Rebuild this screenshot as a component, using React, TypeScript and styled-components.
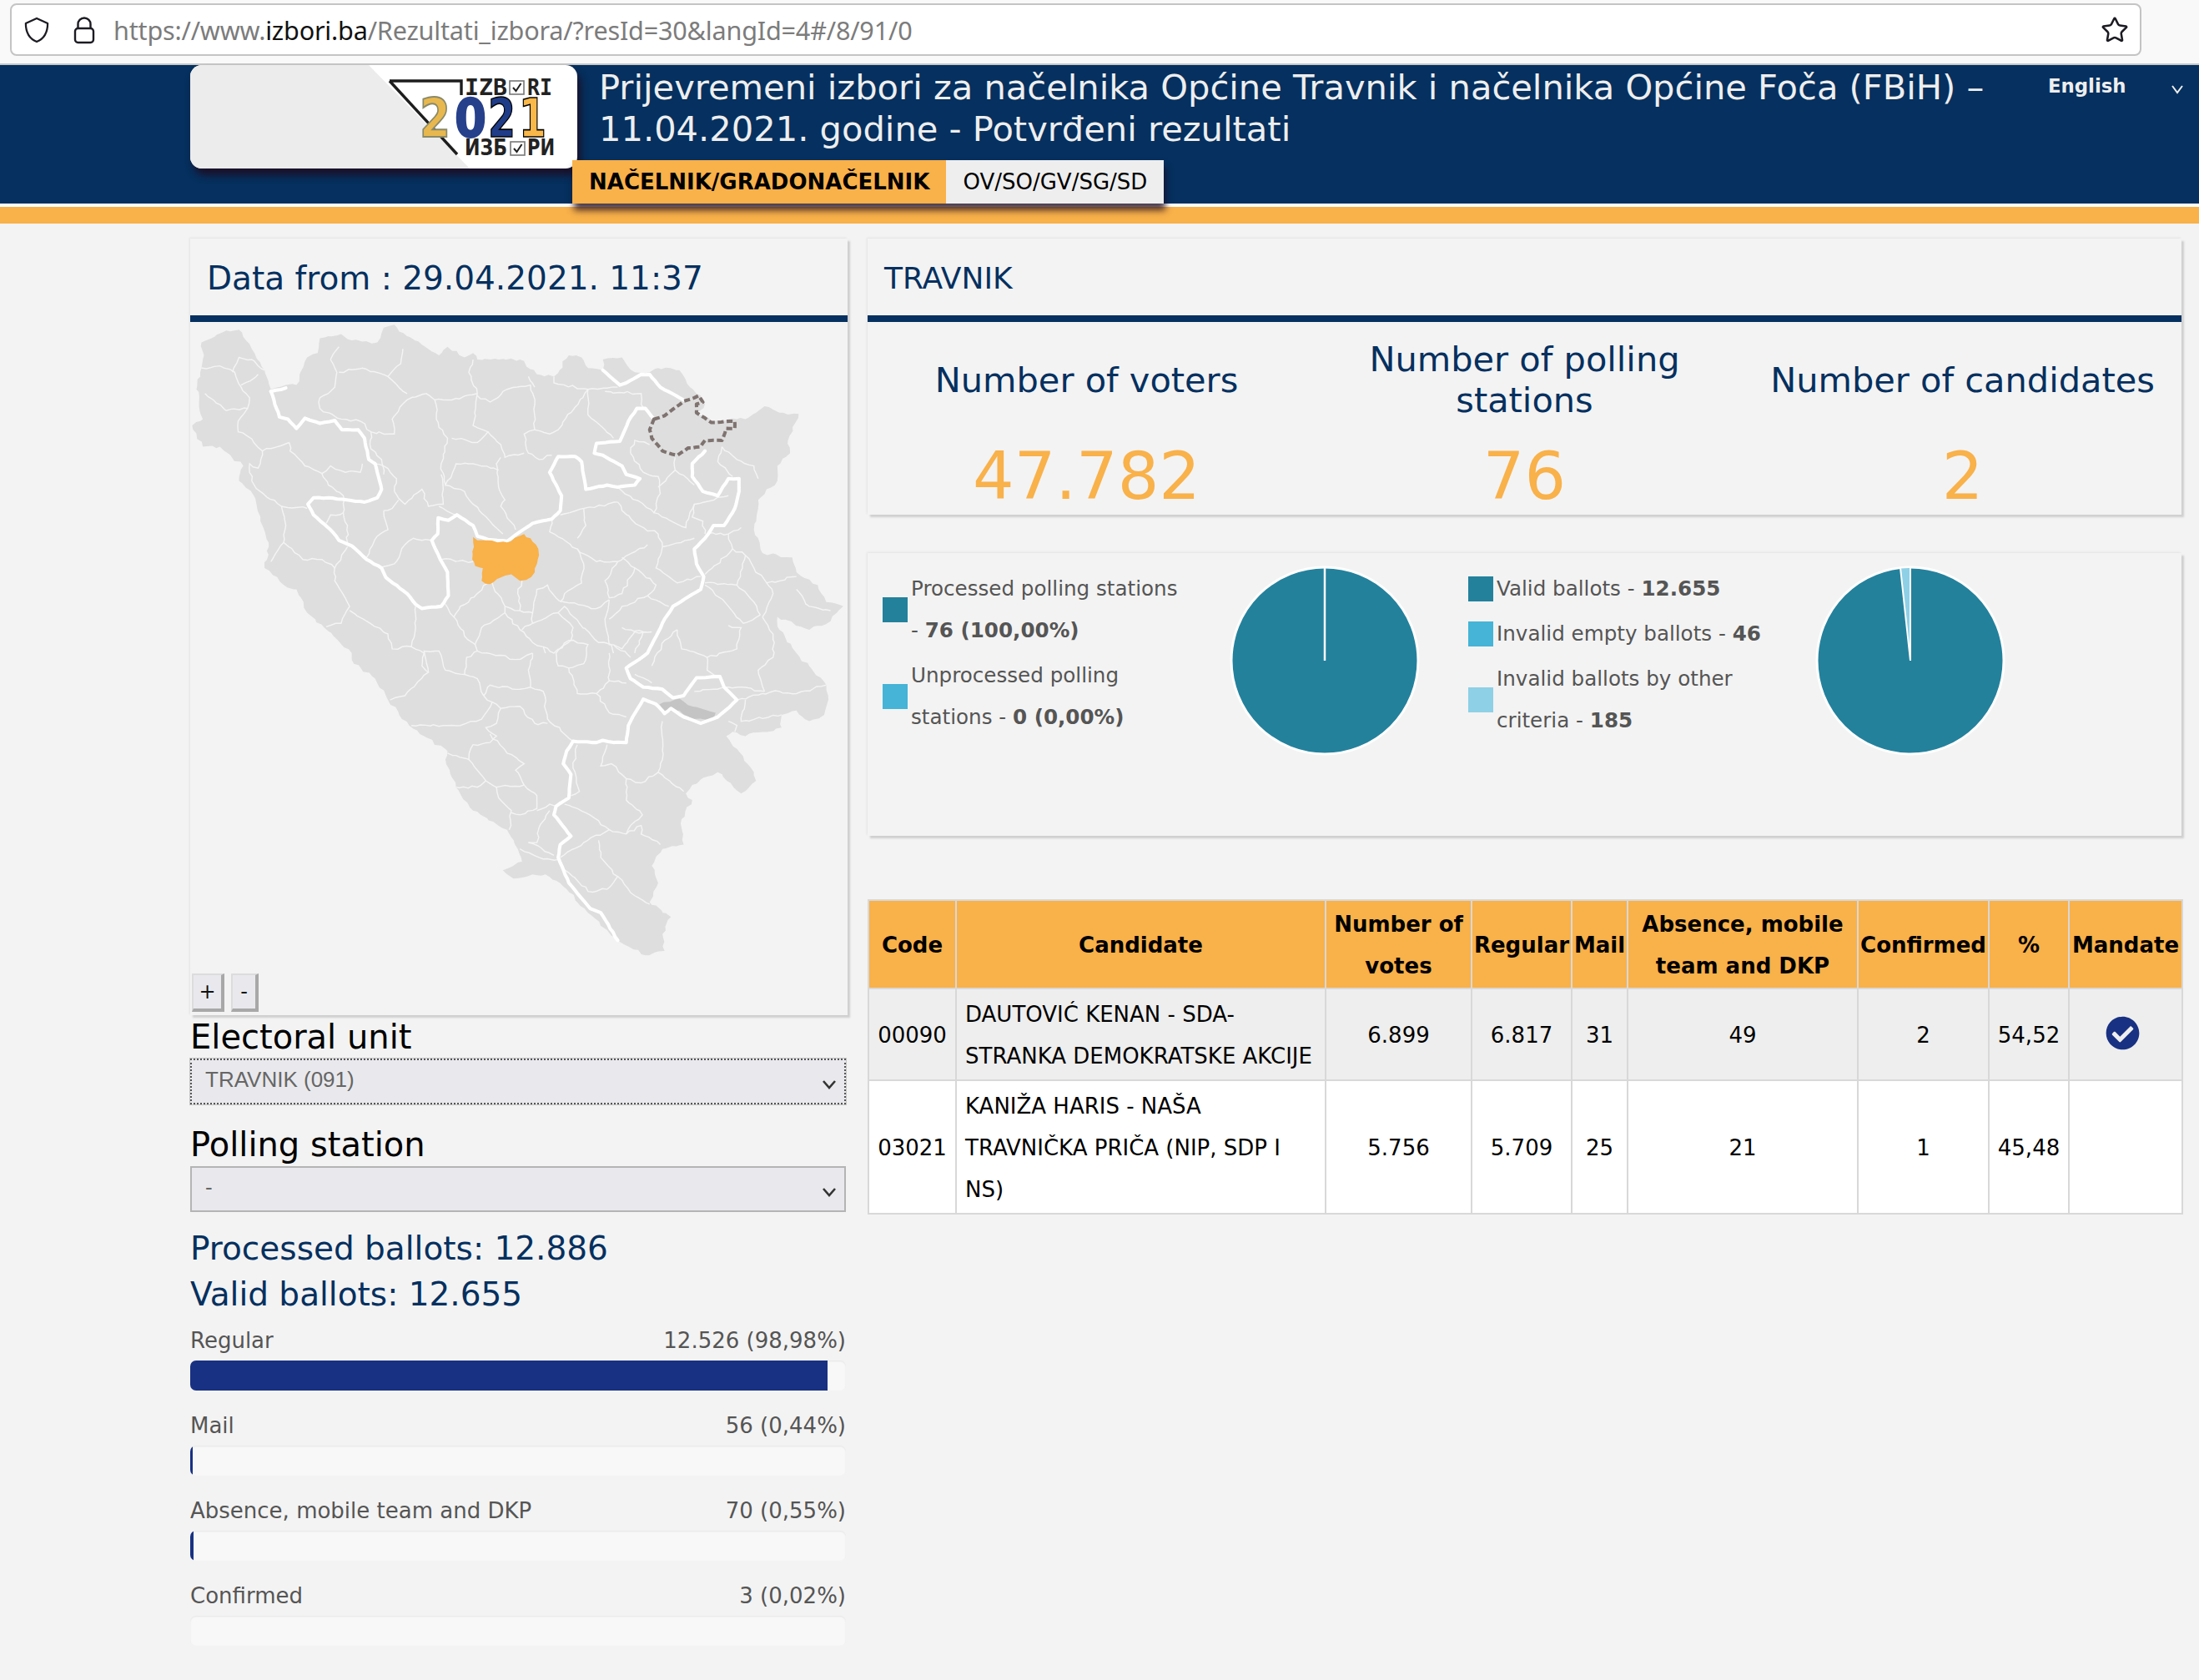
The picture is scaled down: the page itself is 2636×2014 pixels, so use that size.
import React from "react";
import styled, { createGlobalStyle } from "styled-components";
import { Star } from "lucide-react";
import { FaCheckCircle } from "react-icons/fa";

const NAVY = "#05305f";
const ORANGE = "#f9b14a";
const TEAL = "#23819c";

const Global = createGlobalStyle`
  html, body { margin: 0; padding: 0; background: #f3f3f3; }
  body { font-family: "DejaVu Sans", sans-serif; }
  * { box-sizing: border-box; }
`;

const Page = styled.div`
  width: 2636px;
  height: 2014px;
  overflow: hidden;
  background: #f3f3f3;
`;

/* browser chrome */
const BrowserBar = styled.div`
  height: 78px;
  background: #f9f9f9;
  border-bottom: 2px solid #c8c8c8;
  padding: 4px 69px 0 12px;
`;
const UrlBox = styled.div`
  height: 63px;
  background: #fff;
  border: 2px solid #c4c4c4;
  border-radius: 8px;
  display: flex;
  align-items: center;
  padding: 0 13px 0 15px;
`;
const ChromeIcon = styled.svg<{ $w: number; $gap: number }>`
  width: ${(p) => p.$w}px;
  height: 34px;
  flex: none;
  margin-right: ${(p) => p.$gap}px;
  fill: none;
  stroke: #1c1b22;
  stroke-width: 2.4;
  stroke-linejoin: round;
`;
const UrlText = styled.div`
  flex: 1;
  font-family: "Noto Sans", sans-serif;
  font-size: 30.6px;
  letter-spacing: -0.2px;
  color: #7c7c7c;
  white-space: nowrap;
`;
const UrlHost = styled.span`
  color: #111;
`;

/* site header */
const Header = styled.header`
  height: 166px;
  background: ${NAVY};
  display: flex;
  padding-left: 228px;
`;
const Logo = styled.div`
  width: 464px;
  height: 124px;
  flex: none;
  border-radius: 14px;
  background: #fff;
  box-shadow: 4px 8px 10px rgba(30, 10, 30, 0.85);
  overflow: hidden;
  position: relative;
  z-index: 1;
`;
const LogoArt = styled.svg`
  display: block;
  width: 464px;
  height: 124px;
`;
const HeadMiddle = styled.div`
  flex: none;
  width: 1753px;
  display: flex;
  flex-direction: column;
  justify-content: space-between;
`;
const Title = styled.h1`
  margin: 2px 0 0 26px;
  width: 1690px;
  font-size: 41.6px;
  line-height: 50px;
  font-weight: 400;
  color: #eeeeee;
`;
const Tabs = styled.div`
  display: flex;
  align-self: flex-start;
  margin-left: -6px;
  position: relative;
  z-index: 2;
  box-shadow: 2px 8px 8px rgba(30, 10, 30, 0.8);
`;
const Tab = styled.div<{ $active?: boolean }>`
  height: 52px;
  display: flex;
  align-items: center;
  padding: 0 20px;
  font-size: 26px;
  color: #000;
  background: ${(p) => (p.$active ? ORANGE : "#eeeeee")};
  font-weight: ${(p) => (p.$active ? 700 : 400)};
`;
const Lang = styled.div`
  flex: 1;
  display: flex;
  justify-content: space-between;
  align-items: flex-start;
  padding: 10px 18px 0 10px;
  font-size: 22.8px;
  line-height: 30px;
  font-weight: 700;
  color: #eeeeee;
`;
const LangChevron = styled.svg`
  width: 16px;
  height: 12px;
  margin-top: 13px;
  fill: none;
  stroke: #eee;
  stroke-width: 2;
`;
const Strip = styled.div`
  height: 24px;
  background: ${ORANGE};
  border-top: 4px solid #fff;
`;

/* main layout */
const Main = styled.main`
  display: grid;
  grid-template-columns: 788px 1575px;
  column-gap: 24px;
  padding: 18px 0 0 228px;
`;
const Column = styled.div`
  display: flex;
  flex-direction: column;
`;
const Panel = styled.section`
  background: #f3f3f3;
  box-shadow: 3px 3px 2px #cfcfcf, -1px -1px 2px #e4e4e4;
`;
const PanelHead = styled.h2<{ $size: number }>`
  margin: 0;
  height: 100px;
  border-bottom: 8px solid ${NAVY};
  padding: 2px 20px 0;
  display: flex;
  align-items: center;
  font-size: ${(p) => p.$size}px;
  font-weight: 400;
  color: ${NAVY};
`;

/* map */
const MapFrame = styled.div`
  position: relative;
  height: 831px;
`;
const MapArt = styled.svg`
  display: block;
  width: 788px;
  height: 831px;
`;
const ZoomBtns = styled.div`
  position: absolute;
  left: 2px;
  top: 781px;
  display: flex;
  gap: 8px;
`;
const ZoomBtn = styled.div<{ $w: number }>`
  width: ${(p) => p.$w}px;
  height: 46px;
  background: #e9e9ed;
  border-right: 4px solid #a8a8a8;
  border-bottom: 4px solid #a8a8a8;
  border-top: 2px solid #dcdcdc;
  border-left: 2px solid #dcdcdc;
  display: flex;
  align-items: center;
  justify-content: center;
  font-size: 24px;
  color: #111;
`;

/* filters */
const FieldLabel = styled.div`
  font-size: 40px;
  line-height: 52px;
  color: #000;
  height: 52px;
`;
const SelectBox = styled.div<{ $focus?: boolean }>`
  width: 786px;
  height: 55px;
  background: #e9e9ed;
  border: 2px ${(p) => (p.$focus ? "dotted #555" : "solid #b4b4b4")};
  outline: ${(p) => (p.$focus ? "1px solid #c4c4c4" : "none")};
  display: flex;
  align-items: center;
  justify-content: space-between;
  padding: 0 9px 4px 16px;
  font-family: "Liberation Sans", sans-serif;
  font-size: 26px;
  color: #666;
  margin-bottom: ${(p) => (p.$focus ? 22 : 17)}px;
`;
const SelectChevron = styled.svg`
  width: 18px;
  height: 12px;
  margin-top: 10px;
  fill: none;
  stroke: #333;
  stroke-width: 2.6;
`;
const BallotLine = styled.div`
  font-size: 39px;
  line-height: 54.5px;
  color: ${NAVY};
`;
const Bars = styled.div`
  width: 786px;
  margin-top: 10px;
  display: flex;
  flex-direction: column;
  gap: 24px;
`;
const BarLabel = styled.div`
  display: flex;
  justify-content: space-between;
  font-size: 26px;
  line-height: 36px;
  color: #555;
  margin-bottom: 6px;
`;
const Track = styled.div`
  height: 36px;
  border-radius: 7px;
  background: #f8f8f8;
  box-shadow: inset 0 1px 2px rgba(0, 0, 0, 0.08);
  overflow: hidden;
`;
const Fill = styled.div`
  height: 100%;
  background: #183182;
`;

/* stats */
const Stats = styled.div`
  display: grid;
  grid-template-columns: repeat(3, 1fr);
  padding-top: 20px;
  height: 231px;
`;
const Stat = styled.div`
  display: flex;
  flex-direction: column;
  align-items: center;
  text-align: center;
`;
const StatLabel = styled.div`
  height: 98px;
  width: 500px;
  display: flex;
  align-items: center;
  justify-content: center;
  font-size: 41.5px;
  line-height: 49px;
  color: ${NAVY};
  padding: 0 16px;
`;
const StatValue = styled.div`
  margin-top: 21px;
  font-size: 78px;
  line-height: 92px;
  color: ${ORANGE};
`;

/* charts */
const ChartCard = styled(Panel)`
  margin-top: 46px;
  height: 339px;
  display: grid;
  grid-template-columns: 418px 284px 418px 1fr;
  padding: 16px 0 0 18px;
  align-items: start;
`;
const Legend = styled.div`
  padding-top: 2px;
  display: flex;
  flex-direction: column;
  gap: 4px;
`;
const LegendItem = styled.div`
  display: flex;
  align-items: center;
  font-size: 24.6px;
  line-height: 50px;
  color: #555;
`;
const LegendText = styled.div`
  width: 335px;
`;
const Swatch = styled.div<{ $c: string }>`
  width: 30px;
  height: 30px;
  flex: none;
  margin-right: 4px;
  background: ${(p) => p.$c};
`;
const Pie = styled.svg`
  display: block;
  width: 228px;
  height: 228px;
  margin: -1px 0 0 -2px;
`;

/* table */
const Table = styled.table`
  margin-top: 76px;
  width: 1575px;
  table-layout: fixed;
  border-collapse: collapse;
  font-size: 26px;
  line-height: 50px;
  color: #000;
`;
const Th = styled.th`
  background: ${ORANGE};
  border: 2px solid #d8d8d8;
  padding: 3px 0 1px;
  text-align: center;
  font-weight: 700;
`;
const Row = styled.tr<{ $alt?: boolean }>`
  background: ${(p) => (p.$alt ? "#eeeeee" : "#ffffff")};
`;
const Td = styled.td<{ $left?: boolean }>`
  border: 2px solid #d8d8d8;
  padding: ${(p) => (p.$left ? "5px 8px 3px 10px" : "5px 0 3px")};
  text-align: ${(p) => (p.$left ? "left" : "center")};
`;
const CheckWrap = styled.div`
  display: flex;
  justify-content: center;
  padding-right: 8px;
  color: #183182;
  margin-top: -6px;
`;

/* ---------- map drawing ---------- */
type P = [number, number];

function roughen(pts: P[], amp: number, seed: number, closed = false): string {
  let s = seed >>> 0;
  const rnd = () => {
    s = (s + 0x6d2b79f5) >>> 0;
    let t = s;
    t = Math.imul(t ^ (t >>> 15), t | 1);
    t ^= t + Math.imul(t ^ (t >>> 7), t | 61);
    return ((t ^ (t >>> 14)) >>> 0) / 4294967296;
  };
  const list = closed ? [...pts, pts[0]] : pts;
  let d = `M${list[0][0]} ${list[0][1]}`;
  for (let i = 1; i < list.length; i++) {
    const [ax, ay] = list[i - 1];
    const [bx, by] = list[i];
    const len = Math.hypot(bx - ax, by - ay);
    const n = amp > 0 ? Math.max(1, Math.round(len / 11)) : 1;
    for (let k = 1; k <= n; k++) {
      const t = k / n;
      const last = k === n;
      const ox = last ? 0 : (rnd() - 0.5) * 2 * amp;
      const oy = last ? 0 : (rnd() - 0.5) * 2 * amp;
      d += `L${(ax + (bx - ax) * t + ox).toFixed(1)} ${(ay + (by - ay) * t + oy).toFixed(1)}`;
    }
  }
  return d + (closed ? "Z" : "");
}

const OUTLINE: P[] = [[42,60],[100,32],[130,30],[160,75],[190,125],[205,170],[240,160],[265,160],[290,95],[315,85],[320,50],[370,40],[395,55],[455,60],[470,25],[495,18],[525,45],[560,65],[600,90],[620,70],[660,95],[680,85],[690,100],[740,100],[790,100],[830,135],[870,140],[905,90],[935,95],[950,120],[985,125],[985,100],[1030,95],[1060,130],[1095,130],[1115,120],[1165,125],[1190,165],[1215,185],[1225,205],[1205,225],[1240,245],[1300,240],[1320,240],[1365,210],[1400,225],[1445,228],[1420,290],[1425,320],[1395,350],[1395,385],[1350,430],[1340,500],[1360,555],[1430,565],[1440,600],[1490,630],[1510,670],[1550,680],[1520,715],[1470,735],[1395,705],[1400,735],[1440,790],[1510,865],[1515,900],[1505,935],[1470,950],[1440,925],[1405,935],[1405,965],[1320,985],[1290,975],[1275,985],[1300,1015],[1340,1070],[1345,1090],[1310,1120],[1285,1095],[1255,1070],[1195,1100],[1180,1120],[1195,1135],[1170,1180],[1175,1240],[1125,1250],[1100,1290],[1115,1330],[1095,1375],[1145,1410],[1125,1450],[1130,1490],[1085,1500],[1020,1465],[950,1400],[900,1345],[850,1310],[820,1310],[775,1320],[750,1300],[795,1280],[785,1250],[760,1205],[680,1160],[640,1105],[615,1040],[620,1020],[565,985],[530,960],[480,900],[450,850],[400,815],[395,790],[330,730],[290,695],[265,640],[235,630],[190,590],[200,540],[185,490],[165,420],[130,385],[140,350],[85,305],[45,305],[20,255],[45,240],[30,170],[45,100]];

const THIN: P[][] = [
  [[32,122],[85,115],[120,130],[135,165],[155,190],[150,215],[100,220],[70,195],[50,180]],
  [[115,130],[130,95],[160,100],[190,125]],
  [[135,160],[175,135]],
  [[150,215],[128,245],[128,270],[150,280],[185,315],[248,295]],
  [[248,295],[250,315],[285,350],[325,368],[345,350],[380,365],[415,365],[420,345]],
  [[325,368],[340,395],[375,420],[375,460],[345,465],[335,485]],
  [[375,460],[385,490],[385,530]],
  [[185,315],[175,355],[155,345],[160,385],[180,410],[230,445],[290,450]],
  [[230,445],[240,490],[235,530],[205,575]],
  [[235,530],[280,570],[325,570],[355,590],[355,620],[390,680],[370,720],[335,728]],
  [[355,590],[385,540]],
  [[390,690],[430,715],[480,745],[490,780],[535,775],[545,730],[545,680]],
  [[535,775],[565,790],[560,820],[575,835],[520,890],[485,900]],
  [[575,835],[565,785],[600,785],[615,830],[660,840],[690,850],[705,890]],
  [[660,840],[665,800],[690,785],[745,795],[780,805],[820,790]],
  [[690,785],[685,770],[700,730],[755,695],[790,735],[820,765],[845,775],[850,790]],
  [[685,770],[660,750],[635,705],[615,675]],
  [[635,705],[650,680],[690,650],[715,625]],
  [[725,625],[755,680],[755,695]],
  [[755,680],[790,690],[820,695],[830,640],[855,630],[875,660],[895,670],[970,685],[1000,665]],
  [[790,690],[785,650],[795,620]],
  [[820,695],[820,720],[795,735]],
  [[820,720],[880,695],[915,730],[910,760],[875,790],[880,820],[905,825]],
  [[880,695],[895,680],[930,720],[975,765],[1005,770],[1010,790]],
  [[845,775],[870,790],[905,760],[950,770],[940,815],[905,825],[925,885],[970,885],[1000,855],[1040,860]],
  [[820,790],[810,830],[815,870],[845,880],[855,945],[915,997]],
  [[705,890],[720,865],[780,875],[815,870]],
  [[705,890],[725,905],[700,945],[675,950],[650,960],[610,960],[535,960]],
  [[725,905],[745,920],[790,915],[825,955],[855,955]],
  [[745,920],[735,955],[710,965],[735,985],[720,1000],[680,1005],[670,1040],[620,1025]],
  [[720,980],[760,1025],[800,1050],[780,1065],[800,1100],[735,1105],[710,1090],[670,1040]],
  [[710,1090],[690,1105],[640,1105]],
  [[735,1105],[740,1130],[770,1160],[765,1205]],
  [[800,1100],[830,1125],[830,1155],[790,1170],[770,1165]],
  [[830,1160],[860,1145],[875,1150]],
  [[860,1160],[835,1200],[830,1235],[810,1235],[870,1265]],
  [[790,1250],[835,1270],[880,1275]],
  [[895,1145],[945,1165],[1000,1205],[940,1235],[885,1270]],
  [[1000,1205],[1040,1215],[1075,1195],[1075,1215],[1120,1240]],
  [[1040,1215],[1050,1195],[1078,1170],[1040,1135],[1040,1085],[1005,1050],[980,1055],[995,1005]],
  [[1040,1085],[1075,1095],[1115,1070],[1175,1115]],
  [[1115,1070],[1125,1040],[1125,950]],
  [[975,1230],[980,1270],[1020,1315],[995,1345],[950,1350],[890,1290]],
  [[1020,1315],[1060,1360],[1095,1380]],
  [[925,1005],[915,1060],[930,1115],[910,1125]],
  [[320,190],[355,165],[360,130],[345,100]],
  [[320,190],[320,215],[370,240],[415,245],[440,270],[495,275],[490,240],[525,195],[570,180],[590,195]],
  [[345,100],[365,70]],
  [[365,130],[420,120],[480,140],[510,110],[515,75]],
  [[480,140],[525,180]],
  [[590,195],[600,260],[620,285],[605,345]],
  [[590,195],[630,195],[690,180],[670,130],[680,100]],
  [[690,180],[680,255],[715,270],[690,295],[630,285]],
  [[690,185],[720,200],[760,170],[815,160],[825,205],[825,265],[860,275],[880,265],[950,170]],
  [[810,140],[825,165]],
  [[825,265],[800,275],[810,320],[835,335],[865,325]],
  [[715,270],[745,300],[755,330],[800,320]],
  [[745,330],[735,345],[740,400],[755,430],[745,445],[780,500]],
  [[740,360],[680,345],[640,345],[615,395],[605,345]],
  [[615,395],[660,410],[680,440],[720,480],[750,510]],
  [[605,370],[610,440],[575,445],[560,405],[520,440],[495,410]],
  [[495,410],[500,380],[470,350],[445,345]],
  [[440,270],[440,310],[465,335],[470,370]],
  [[470,455],[490,450],[505,430]],
  [[470,455],[480,500],[455,515],[430,565]],
  [[460,590],[495,580],[520,535],[540,520],[560,525],[582,525]],
  [[605,570],[680,575]],
  [[640,465],[600,445]],
  [[870,140],[870,155],[950,170],[1020,165]],
  [[950,170],[950,230],[990,265],[1010,285]],
  [[990,175],[1075,180],[1075,205],[1105,240]],
  [[1050,320],[1080,365],[1115,375],[1120,415],[1105,460],[1020,400]],
  [[1050,320],[1060,290],[1095,300]],
  [[1155,330],[1155,360],[1115,400]],
  [[1155,360],[1200,395]],
  [[1265,305],[1255,340],[1290,375]],
  [[1265,305],[1300,335],[1340,350],[1350,380]],
  [[1105,460],[1180,495],[1200,440],[1280,420]],
  [[1020,435],[1030,455],[1070,490],[1115,510],[1125,540]],
  [[1125,540],[1110,590],[1160,625],[1215,610]],
  [[1125,540],[1200,520]],
  [[1200,440],[1195,470],[1220,480],[1225,510]],
  [[1230,510],[1280,510],[1310,495]],
  [[1280,510],[1290,545],[1225,605]],
  [[1290,545],[1320,560],[1300,630],[1225,625]],
  [[1320,560],[1340,590],[1370,625],[1440,610]],
  [[1370,625],[1385,650],[1360,705]],
  [[1225,630],[1280,680],[1315,720],[1355,700]],
  [[1440,640],[1470,680],[1520,690]],
  [[1300,630],[1340,670],[1355,700]],
  [[1360,705],[1385,745],[1385,800],[1350,830],[1365,880]],
  [[1160,735],[1170,780],[1230,800],[1300,780],[1310,730],[1280,725]],
  [[1160,735],[1130,760],[1100,820]],
  [[1230,800],[1230,830],[1260,845]],
  [[1300,900],[1360,885],[1400,880],[1440,885],[1510,865]],
  [[1365,880],[1310,870],[1270,870]],
  [[1320,900],[1310,950],[1405,935]],
  [[1280,950],[1300,960],[1295,975]],
  [[1200,880],[1280,870]],
  [[865,475],[860,505],[925,545],[940,580],[935,625],[895,650],[885,670]],
  [[885,465],[940,450],[1020,435]],
  [[940,450],[945,490],[925,520]],
  [[925,545],[970,575],[1020,575],[1090,535]],
  [[1020,575],[990,620],[1000,660],[1030,650],[1060,590],[1110,630],[1090,655],[1030,680],[1000,710]],
  [[1030,565],[1060,590]],
  [[1090,655],[1140,680]],
  [[1000,665],[990,710],[1000,770],[1030,780],[1060,740],[1100,740]],
  [[1030,730],[1080,740],[1060,790]],
  [[1010,770],[1050,800]],
  [[1000,855],[1000,790]],
  [[970,885],[1000,930],[1040,940]],
  [[1060,840],[1100,860]],
];

const THICK: P[][] = [
  [[205,175],[225,235],[245,240],[265,262],[285,238],[320,250],[355,243],[372,265],[410,265],[425,285],[435,335],[450,345],[465,405],[455,425],[425,435],[340,425],[305,425],[292,440],[305,465],[345,500],[365,525],[395,538],[430,570],[465,590],[475,612],[525,650],[545,675],[560,685],[605,680],[622,655],[620,600],[603,570],[583,525],[597,510],[598,472],[622,478],[642,465],[680,490],[690,515],[715,523],[760,527],[790,505],[820,485],[865,475],[885,455],[888,420],[860,365],[880,328],[920,328],[935,340],[945,405],[995,395],[1020,400],[1060,395],[1072,380],[1040,370],[1030,350],[985,325],[965,320],[970,297],[1025,292],[1045,245],[1065,215],[1085,215],[1105,240]],
  [[205,175],[240,167]],
  [[1225,315],[1195,345],[1195,375],[1220,410],[1255,420],[1280,380],[1305,380],[1305,410],[1295,450],[1270,490],[1245,490],[1225,520],[1200,545],[1205,580],[1222,610],[1215,640],[1150,680],[1130,710],[1090,790],[1070,805],[1040,825],[1050,850],[1080,870],[1125,875],[1150,895],[1175,890],[1205,848],[1260,845],[1270,870],[1300,900],[1255,940],[1215,955],[1175,940],[1145,920],[1130,932],[1110,910],[1080,898],[1055,940],[1045,960],[1040,1000],[1010,1000],[985,995],[970,1000],[915,997],[900,1020],[892,1050],[910,1075],[905,1130],[875,1150],[870,1170],[890,1195],[910,1220],[885,1240],[880,1270],[905,1330],[955,1390],[980,1400],[1020,1465]],
  [[985,125],[1025,160],[1040,155],[1075,135],[1095,135],[1120,165],[1175,195]],
];

const BRCKO: P[] = [[1105,240],[1130,232],[1175,198],[1200,190],[1210,185],[1220,200],[1205,205],[1205,225],[1240,248],[1295,245],[1295,262],[1275,262],[1265,290],[1225,290],[1215,305],[1185,308],[1160,325],[1125,315],[1100,285],[1095,265]];
const TRAVNIK: P[] = [[680,517],[690,525],[715,525],[760,530],[800,510],[815,520],[828,535],[835,560],[825,600],[805,618],[790,620],[770,605],[745,612],[720,628],[700,620],[703,590],[685,585],[678,570],[682,540]];
const GREY: P[] = [[1118,910],[1165,897],[1185,912],[1250,930],[1245,945],[1195,945],[1165,925],[1130,925]];

function BosniaMap() {
  const outline = roughen(OUTLINE, 3.5, 11, true);
  return (
    <MapArt viewBox="15.7 11.8 1544 1629">
      <defs>
        <clipPath id="bih">
          <path d={outline} />
        </clipPath>
      </defs>
      <path d={outline} fill="#dedede" />
      <g clipPath="url(#bih)" fill="none" stroke="#f4f4f4" strokeWidth="2.8">
        {THIN.map((l, i) => (
          <path key={i} d={roughen(l, 3, 100 + i)} />
        ))}
      </g>
      <path d={roughen(GREY, 1.5, 7, true)} fill="#c4c4c4" />
      <g fill="none" stroke="#fff" strokeWidth="8" strokeLinejoin="round" strokeLinecap="round">
        {THICK.map((l, i) => (
          <path key={i} d={roughen(l, 0.8, 300 + i)} />
        ))}
      </g>
      <path d={roughen(TRAVNIK, 3, 21, true)} fill={ORANGE} />
      <path
        d={roughen(BRCKO, 0.8, 31, true)}
        fill="none"
        stroke="#7f7370"
        strokeWidth="8"
        strokeDasharray="14 7"
        strokeLinejoin="round"
      />
    </MapArt>
  );
}

function LogoDrawing() {
  const mono = { fontFamily: '"DejaVu Sans Mono", monospace', fontWeight: 700 } as const;
  const sans = { fontFamily: '"DejaVu Sans", sans-serif', fontWeight: 700 } as const;
  const Tick = ({ x, y }: { x: number; y: number }) => (
    <g>
      <rect x={x} y={y} width="17" height="16" fill="none" stroke="#777" strokeWidth="1.6" />
      <path d={`M${x + 4} ${y + 8}l3.5 4 6-9`} fill="none" stroke="#222" strokeWidth="2" />
    </g>
  );
  return (
    <LogoArt viewBox="0 0 464 124">
      <path d="M0 0H214L335 124H0Z" fill="#ececec" />
      <path d="M239 19H325V36" fill="none" stroke="#1d1d1d" strokeWidth="3.4" />
      <path d="M239 19L320 107" fill="none" stroke="#1d1d1d" strokeWidth="3.4" />
      <text x="329" y="36" fontSize="26" style={mono} fill="#222" textLength="51" lengthAdjust="spacingAndGlyphs">IZB</text>
      <Tick x={383} y={19} />
      <text x="404" y="36" fontSize="26" style={mono} fill="#222" textLength="30" lengthAdjust="spacingAndGlyphs">RI</text>
      <text x="275" y="86" fontSize="64" style={sans} fill="#e8b84e" stroke="#8a8a6a" strokeWidth="2" textLength="37" lengthAdjust="spacingAndGlyphs">2</text>
      <text x="317" y="86" fontSize="64" style={sans} fill="#27408b" stroke="#27408b" strokeWidth="2" textLength="38" lengthAdjust="spacingAndGlyphs">0</text>
      <text x="357" y="86" fontSize="64" style={sans} fill="#1f3c88" stroke="#000" strokeWidth="1.6" textLength="33" lengthAdjust="spacingAndGlyphs">2</text>
      <text x="394" y="86" fontSize="64" style={sans} fill="#f9b84a" stroke="#000" strokeWidth="1.6" textLength="33" lengthAdjust="spacingAndGlyphs">1</text>
      <text x="329" y="108" fontSize="26" style={sans} fill="#222" textLength="51" lengthAdjust="spacingAndGlyphs">ИЗБ</text>
      <Tick x={384} y={92} />
      <text x="404" y="108" fontSize="26" style={sans} fill="#222" textLength="33" lengthAdjust="spacingAndGlyphs">РИ</text>
    </LogoArt>
  );
}

const BARS = [
  { label: "Regular", value: "12.526 (98,98%)", fill: 97.2 },
  { label: "Mail", value: "56 (0,44%)", fill: 0.4 },
  { label: "Absence, mobile team and DKP", value: "70 (0,55%)", fill: 0.5 },
  { label: "Confirmed", value: "3 (0,02%)", fill: 0 },
];

const STATS = [
  { label: "Number of voters", value: "47.782" },
  { label: "Number of polling stations", value: "76" },
  { label: "Number of candidates", value: "2" },
];

const HEADERS = ["Code", "Candidate", "Number of votes", "Regular", "Mail", "Absence, mobile team and DKP", "Confirmed", "%", "Mandate"];
const WIDTHS = [105, 443, 175, 120, 67, 276, 157, 96, 136];

const ROWS = [
  { code: "00090", name: "DAUTOVIĆ KENAN - SDA-STRANKA DEMOKRATSKE AKCIJE", n: ["6.899", "6.817", "31", "49", "2", "54,52"], mandate: true },
  { code: "03021", name: "KANIŽA HARIS - NAŠA TRAVNIČKA PRIČA (NIP, SDP I NS)", n: ["5.756", "5.709", "25", "21", "1", "45,48"], mandate: false },
];

export default function App() {
  return (
    <Page>
      <Global />
      <BrowserBar>
        <UrlBox>
          <ChromeIcon $w={30} $gap={29} viewBox="0 0 32 34">
            <path d="M16 2L30 8.5C30 20 26 28 16 32C6 28 2 20 2 8.5Z" />
          </ChromeIcon>
          <ChromeIcon $w={26} $gap={22} viewBox="3 0 26 34">
            <rect x="5" y="15" width="22" height="17" rx="3.5" />
            <path d="M8.5 15V10a7.5 7.5 0 0 1 15 0V15" />
          </ChromeIcon>
          <UrlText>
            https://www.<UrlHost>izbori.ba</UrlHost>/Rezultati_izbora/?resId=30&amp;langId=4#/8/91/0
          </UrlText>
          <Star size={34} color="#1c1b22" strokeWidth={1.8} />
        </UrlBox>
      </BrowserBar>

      <Header>
        <Logo>
          <LogoDrawing />
        </Logo>
        <HeadMiddle>
          <Title>
            Prijevremeni izbori za načelnika Općine Travnik i načelnika Općine Foča (FBiH) – 11.04.2021. godine - Potvrđeni rezultati
          </Title>
          <Tabs>
            <Tab $active>NAČELNIK/GRADONAČELNIK</Tab>
            <Tab>OV/SO/GV/SG/SD</Tab>
          </Tabs>
        </HeadMiddle>
        <Lang>
          English
          <LangChevron viewBox="0 0 16 12">
            <path d="M2 2L8 10L14 2" />
          </LangChevron>
        </Lang>
      </Header>
      <Strip />

      <Main>
        <Column>
          <Panel>
            <PanelHead $size={39}>Data from : 29.04.2021. 11:37</PanelHead>
            <MapFrame>
              <BosniaMap />
              <ZoomBtns>
                <ZoomBtn $w={39}>+</ZoomBtn>
                <ZoomBtn $w={33}>-</ZoomBtn>
              </ZoomBtns>
            </MapFrame>
          </Panel>
          <FieldLabel>Electoral unit</FieldLabel>
          <SelectBox $focus>
            TRAVNIK (091)
            <SelectChevron viewBox="0 0 18 12">
              <path d="M2 2L9 10L16 2" />
            </SelectChevron>
          </SelectBox>
          <FieldLabel>Polling station</FieldLabel>
          <SelectBox>
            -
            <SelectChevron viewBox="0 0 18 12">
              <path d="M2 2L9 10L16 2" />
            </SelectChevron>
          </SelectBox>
          <BallotLine>Processed ballots: 12.886</BallotLine>
          <BallotLine>Valid ballots: 12.655</BallotLine>
          <Bars>
            {BARS.map((b) => (
              <div key={b.label}>
                <BarLabel>
                  <span>{b.label}</span>
                  <span>{b.value}</span>
                </BarLabel>
                <Track>
                  <Fill style={{ width: `${b.fill}%` }} />
                </Track>
              </div>
            ))}
          </Bars>
        </Column>

        <Column>
          <Panel>
            <PanelHead $size={36}>TRAVNIK</PanelHead>
            <Stats>
              {STATS.map((s) => (
                <Stat key={s.label}>
                  <StatLabel>{s.label}</StatLabel>
                  <StatValue>{s.value}</StatValue>
                </Stat>
              ))}
            </Stats>
          </Panel>

          <ChartCard>
            <Legend>
              <LegendItem>
                <Swatch $c={TEAL} />
                <LegendText>
                  Processed polling stations - <b>76 (100,00%)</b>
                </LegendText>
              </LegendItem>
              <LegendItem>
                <Swatch $c="#45b4d6" />
                <LegendText>
                  Unprocessed polling stations - <b>0 (0,00%)</b>
                </LegendText>
              </LegendItem>
            </Legend>
            <Pie viewBox="0 0 228 228">
              <circle cx="114" cy="114" r="112" fill={TEAL} stroke="#fff" strokeWidth="3" />
              <path d="M114 114V2" stroke="#fff" strokeWidth="2.5" />
            </Pie>
            <Legend>
              <LegendItem>
                <Swatch $c={TEAL} />
                <LegendText>
                  Valid ballots - <b>12.655</b>
                </LegendText>
              </LegendItem>
              <LegendItem>
                <Swatch $c="#45b4d6" />
                <LegendText>
                  Invalid empty ballots - <b>46</b>
                </LegendText>
              </LegendItem>
              <LegendItem>
                <Swatch $c="#8ed0e6" />
                <LegendText>
                  Invalid ballots by other criteria - <b>185</b>
                </LegendText>
              </LegendItem>
            </Legend>
            <Pie viewBox="0 0 228 228">
              <circle cx="114" cy="114" r="112" fill={TEAL} stroke="#fff" strokeWidth="3" />
              <path d="M114 114L102 2.6A112 112 0 0 1 114 2Z" fill="#8ed0e6" stroke="#fff" strokeWidth="2" />
            </Pie>
          </ChartCard>

          <Table>
            <colgroup>
              {WIDTHS.map((w, i) => (
                <col key={i} style={{ width: w }} />
              ))}
            </colgroup>
            <thead>
              <tr>
                {HEADERS.map((h) => (
                  <Th key={h}>{h}</Th>
                ))}
              </tr>
            </thead>
            <tbody>
              {ROWS.map((r, i) => (
                <Row key={r.code} $alt={i === 0}>
                  <Td>{r.code}</Td>
                  <Td $left>{r.name}</Td>
                  {r.n.map((v, j) => (
                    <Td key={j}>{v}</Td>
                  ))}
                  <Td>
                    {r.mandate && (
                      <CheckWrap>
                        <FaCheckCircle size={41} />
                      </CheckWrap>
                    )}
                  </Td>
                </Row>
              ))}
            </tbody>
          </Table>
        </Column>
      </Main>
    </Page>
  );
}
